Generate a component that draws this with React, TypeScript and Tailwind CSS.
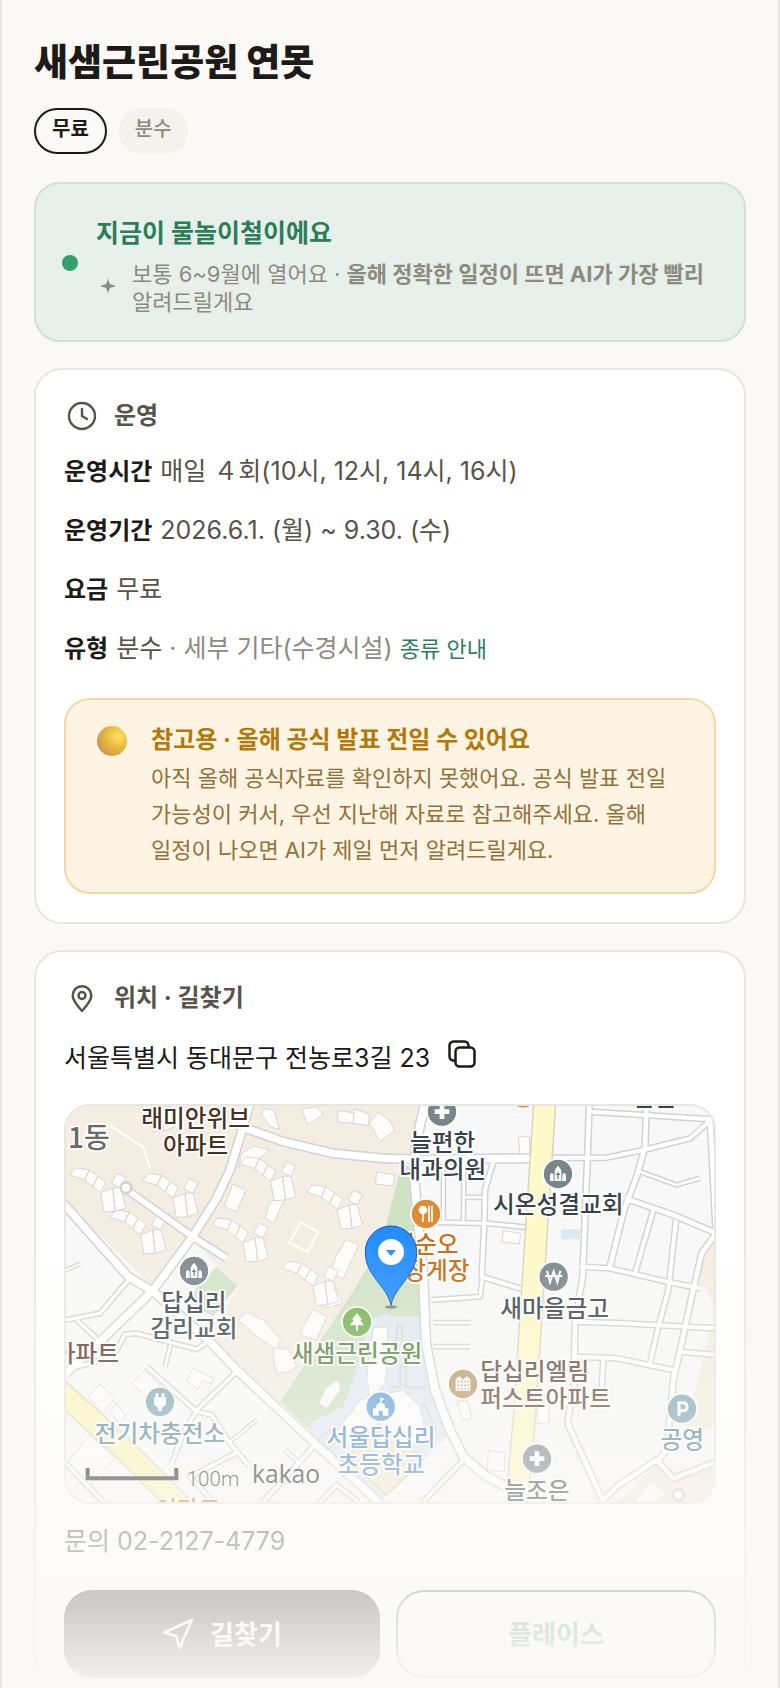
import type { ReactNode } from "react";

type Point = [number, number];

type Road = {
  width: number;
  points: string;
};

type PlaceLabel = {
  lines: string[];
  x: number;
  y: number;
  color: string;
  anchor?: "start" | "middle" | "end";
  size?: number;
};

const ROADS: Road[] = [
  { width: 22, points: "600,40 575,125 540,240 500,325 428,440 310,600 150,755 48,850" },
  { width: 22, points: "560,105 700,155 850,190 1000,205 1110,208 1440,205" },
  { width: 18, points: "225,295 428,440 530,505" },
  { width: 22, points: "40,340 235,560 310,605 480,755 560,840 795,1060 990,1240" },
  { width: 24, points: "1125,40 1100,150 1092,260 1120,560 1128,760 1155,900 1200,1020 1240,1100 1310,1160 1390,1200" },
  { width: 14, points: "1618,40 1612,210 1598,560 1575,700 1572,880 1553,1000 1655,1225" },
  { width: 12, points: "1620,65 1985,88" },
  { width: 14, points: "1790,40 1785,170 1760,260 1722,360 1680,530" },
  { width: 12, points: "1510,203 1670,203 1780,180 1920,145 1985,88" },
  { width: 14, points: "1980,80 1998,430 1955,490 1925,620 1895,760 1870,870 1850,1080 1825,1110" },
  { width: 14, points: "1725,325 1870,375 2000,430" },
  { width: 12, points: "1590,530 1680,535 1850,575 1950,595" },
  { width: 12, points: "1810,360 1755,550" },
  { width: 12, points: "1878,390 1855,600 1825,710 1800,820" },
  { width: 12, points: "1575,695 1720,700 2000,715" },
  { width: 12, points: "1575,800 1700,805 1870,840" },
  { width: 12, points: "1890,785 2000,795" },
  { width: 12, points: "1660,810 1655,895" },
  { width: 14, points: "1655,1235 1700,1190 1820,1110 1870,1165 2000,1115" },
  { width: 8, points: "1770,245 1880,285 1950,265" },
  { width: 10, points: "1110,396 1310,400 1430,412" },
  { width: 12, points: "1330,215 1305,300 1303,400 1295,560 1425,600" },
  { width: 8, points: "1180,215 1180,394" },
  { width: 8, points: "1242,215 1240,394" },
  { width: 8, points: "1240,322 1305,322" },
  { width: 10, points: "1145,630 1290,620 1298,560" },
  { width: 8, points: "1150,698 1263,698" },
  { width: 8, points: "1150,770 1260,770" },
  { width: 10, points: "1120,1235 1240,1110" },
  { width: 10, points: "48,690 150,670 240,565" },
  { width: 10, points: "80,690 145,750" },
  { width: 10, points: "48,840 190,800 225,733 260,730 440,778 480,750" },
  { width: 8, points: "362,765 345,830" },
  { width: 10, points: "290,830 440,965 485,975 540,1060 600,1130" },
  { width: 10, points: "560,845 440,960 400,1030 365,1120" },
  { width: 6, points: "620,990 540,1055" },
  { width: 10, points: "565,1085 420,1160 490,1236" },
  { width: 12, points: "795,1065 640,1236" },
  { width: 8, points: "705,1080 755,1125" },
  { width: 10, points: "48,1120 160,1236" },
  { width: 10, points: "810,1236 860,1185 925,1236" },
  { width: 6, points: "48,540 90,522" },
];

// Blocks of flats share one footprint, dropped at [x, y].
const FLATS: Point[] = [
  [277, 248],
  [180, 358],
  [487, 382],
  [570, 198],
  [770, 283],
  [697, 512],
  [60, 232],
  [205, -10],
];

const LOTS: string[] = [
  "548,282 587,300 560,366 523,350",
  "680,318 704,330 692,352 672,398 645,385 655,350",
  "980,246 1034,254 1030,288 976,282",
  "865,62 912,68 910,100 862,96",
  "912,56 958,72 955,106 910,100",
  "985,66 1020,92 1034,122 990,154 958,100",
  "756,58 800,50 820,74 772,104",
  "640,55 672,60 688,118 660,110 634,72",
  "575,190 610,168 660,180 620,210 566,232",
  "888,448 926,464 905,510 880,566 842,550 858,498",
  "566,690 588,665 640,690 692,750 680,780 620,740",
  "790,658 830,680 800,750 752,735 765,700",
  "672,775 715,778 740,830 718,845 682,850 670,810",
  "800,590 850,580 878,640 828,655",
  "1405,142 1438,138 1440,195 1410,196",
  "1360,422 1412,430 1408,462 1355,456",
  "1222,935 1252,930 1265,985 1238,992",
  "1462,945 1498,945 1496,1002 1462,1000",
  "1315,1082 1366,1088 1362,1145 1312,1140",
  "865,870 872,900 830,955 806,940 830,890",
  "970,712 1012,712 1014,800 1005,880 960,930 950,860 962,780",
  "930,930 1060,900 1110,950 1130,1040 1000,1110 850,1040",
  "150,882 195,925 158,970 115,920",
  "285,842 330,885 300,930 245,880",
  "430,835 492,865 484,882 458,872 444,898 410,872",
  "120,1035 195,1105 115,1190 48,1120",
  "200,940 228,980 210,1000 178,965",
  "1800,1175 1850,1210 1820,1240 1750,1236",
];

const PLACES: PlaceLabel[] = [
  { lines: ["래미안위브", "아파트"], x: 437, y: 112, color: "#4a3020" },
  { lines: ["1동"], x: 54, y: 174, color: "#6b6b6b", anchor: "start", size: 84 },
  { lines: ["늘편한", "내과의원"], x: 1178, y: 184, color: "#37434b" },
  { lines: ["시온성결교회"], x: 1525, y: 370, color: "#37434b" },
  { lines: ["최순오", "간장게장"], x: 1128, y: 488, color: "#c4690c" },
  { lines: ["새마을금고"], x: 1514, y: 680, color: "#37434b" },
  { lines: ["답십리", "감리교회"], x: 432, y: 662, color: "#37434b" },
  { lines: ["아파트"], x: 207, y: 816, color: "#553526", anchor: "end" },
  { lines: ["새샘근린공원"], x: 921, y: 816, color: "#527f39" },
  { lines: ["답십리엘림", "퍼스트아파트"], x: 1291, y: 871, color: "#5d4435", anchor: "start" },
  { lines: ["서울답십리", "초등학교"], x: 993, y: 1068, color: "#4587c8" },
  { lines: ["전기차충전소"], x: 330, y: 1055, color: "#4f8198" },
  { lines: ["공영"], x: 1897, y: 1075, color: "#4f8198" },
  { lines: ["늘조은"], x: 1461, y: 1226, color: "#37434b" },
  { lines: ["이마트"], x: 414, y: 1284, color: "#e06c10" },
  { lines: ["은문"], x: 1815, y: 48, color: "#37434b" },
];

const Marker = ({ x, y, color, children }: { x: number; y: number; color: string; children?: ReactNode }) => (
  <g transform={`translate(${x} ${y})`}>
    <circle r="45" fill={color} stroke="#fff" strokeWidth="5" />
    {children}
  </g>
);

const Church = () => (
  <>
    <path d="M-24 21V2q5-10 11 0v19zM13 21V2q5-10 11 0v19zM-10 21V-10Q-8-17 0-25Q8-17 10-10V21z" fill="#fff" />
    <path d="M0-6V15M-6 1H6" stroke="#6f7b81" strokeWidth="4" />
  </>
);

const KakaoMap = () => (
  <svg
    viewBox="48 48 1944 1188"
    preserveAspectRatio="xMidYMid slice"
    className="size-full"
    role="img"
    aria-label="새샘근린공원 주변 지도"
  >
    <rect x="48" y="48" width="1944" height="1188" fill="#f8f8f8" />
    <path d="M48 48H1120L1098 200L1050 220L1000 460L900 620L690 938L480 748L565 590L430 455L310 590L48 340z" fill="#f4ede2" />
    <path d="M1992 440L1965 500L1940 580L1970 600L1992 650zM1992 680L1900 1040L1992 1010zM1825 1115L1700 1236H1992V1125L1870 1170z" fill="#f4ede2" />
    <path d="M500 530L563 587L490 680L420 640L440 590z" fill="#d2e5c8" />
    <path d="M1055 215L1090 240L1095 440L1112 560V682L1000 700L905 890L880 950L785 1025L690 937L905 610L960 520L1010 400z" fill="#cfe2c4" />
    <path d="M970 685L1005 668L1030 680L1112 682L1125 770L1150 890L1200 1030L1100 1130L990 1236L785 1035V995L880 950L915 850L940 760z" fill="#dfe9f2" />
    <path d="M1533 418H1590V448H1533z" fill="#dce8f0" />

    <g fill="#fdfcfb" stroke="#dad6d1" strokeWidth="3">
      {LOTS.map((points) => (
        <polygon key={points} points={points} />
      ))}
      {FLATS.map(([x, y]) => (
        <path
          key={`${x}-${y}`}
          transform={`translate(${x} ${y})`}
          d="M0 24L16 2L36 4L58 8L44 38zM58 8L84 26L68 58L44 38zM84 26L108 44L92 76L68 58zM124 48L140 18L168 30L152 62zM92 76L128 62L136 132L102 134zM128 62L152 60L168 122L136 132z"
        />
      ))}
    </g>
    <path d="M752 398L804 426L772 486L718 458z" fill="none" stroke="#fff" strokeWidth="6" />
    <path d="M180 106L280 172L300 234" fill="none" stroke="#fff" strokeWidth="6" />
    <path d="M985 1000L1120 1110L1010 1215L885 1105z" fill="#f3e8cf" stroke="#d9c9a5" strokeWidth="4" />
    <g fill="none" stroke="#ddcfc4" strokeWidth="4">
      <path d="M1040 780V707H1056V780M1018 892H1050V830H1068V892H1130" />
      <path d="M850 1010L800 1050M1120 940L1160 1020" />
    </g>

    <g fill="none" strokeLinejoin="round">
      {ROADS.map((road) => (
        <polyline key={road.points} points={road.points} stroke="#d2d2d2" strokeWidth={road.width + 9} />
      ))}
      {ROADS.map((road) => (
        <polyline key={road.points} points={road.points} stroke="#fff" strokeWidth={road.width} />
      ))}
      <circle cx="228" cy="293" r="16" fill="#fff" stroke="#d2d2d2" strokeWidth="8" />
      <circle cx="1885" cy="1215" r="16" fill="#fff" stroke="#d2d2d2" strokeWidth="8" />
      <polyline points="1484,40 1446,630 1425,960 1400,1240" stroke="#d6d1b8" strokeWidth="70" />
      <polyline points="1484,40 1446,630 1425,960 1400,1240" stroke="#fdf9c8" strokeWidth="62" />
      <polyline points="20,895 210,1065 410,1265" stroke="#d6d1b8" strokeWidth="70" />
      <polyline points="20,895 210,1065 410,1265" stroke="#fdf6b8" strokeWidth="62" />
    </g>

    <Marker x={432} y={543} color="#78868c">
      <Church />
    </Marker>
    <Marker x={1524} y={252} color="#78868c">
      <Church />
    </Marker>
    <Marker x={1176} y={65} color="#78868c">
      <path d="M0-22V22M-22 0H22" stroke="#fff" strokeWidth="14" />
    </Marker>
    <Marker x={1461} y={1106} color="#78868c">
      <path d="M0-22V22M-22 0H22" stroke="#fff" strokeWidth="14" />
    </Marker>
    <Marker x={1420} y={10} color="#e08a2e" />
    <Marker x={1128} y={372} color="#de8c33">
      <circle cx="-9" cy="-12" r="13" fill="#fff" />
      <path d="M-9-4V24M9-25V24M18-25V24" stroke="#fff" strokeWidth="5" />
    </Marker>
    <Marker x={1511} y={560} color="#78868c">
      <path d="M-20-18L-11 17L0-16L11 17L20-18M-26-2H26" fill="none" stroke="#fff" strokeWidth="6" />
    </Marker>
    <Marker x={921} y={696} color="#76b150">
      <path d="M0-27L15-7H9L21 10H3V26H-3V10H-21L-9-7H-15z" fill="#fff" />
    </Marker>
    <Marker x={992} y={950} color="#5f9fd8">
      <path d="M-23 27V5H-13V-5L0-15L13-5V5H23V27H6V12H-6V27z" fill="#fff" />
      <path d="M0-12V-27L10-22L0-18" fill="#fff" stroke="#fff" strokeWidth="3" />
    </Marker>
    <Marker x={330} y={936} color="#7fa5b5">
      <path d="M-18-14H18V2Q18 12 6 16V27H-6V16Q-18 12-18 2z" fill="#fff" />
      <path d="M-9-14V-26M9-14V-26" stroke="#fff" strokeWidth="8" />
    </Marker>
    <Marker x={1239} y={882} color="#bd9465">
      <path d="M-22 21V-14L-12-23L0-14L12-23L22-14V21z" fill="#fff" />
      <path d="M-16-7H18M-16 4H18M-16 15H18" stroke="#bd9465" strokeWidth="5" strokeDasharray="5 5" />
    </Marker>
    <Marker x={1896} y={956} color="#7fa5b5">
      <path d="M-9 22V-18H3Q15-18 15-6T3 6H-9" fill="none" stroke="#fff" strokeWidth="9" />
    </Marker>

    <g className="font-['Noto_Sans_CJK_KR',sans-serif] font-medium">
      {PLACES.map(({ lines, x, y, color, anchor = "middle", size = 71 }) => (
        <text
          key={`${x}-${y}`}
          textAnchor={anchor}
          fontSize={size}
          fill={color}
          stroke="#fff"
          strokeWidth="11"
          strokeLinejoin="round"
          paintOrder="stroke"
        >
          {lines.map((line, i) => (
            <tspan key={line} x={x} y={y + i * 80}>
              {line}
            </tspan>
          ))}
        </text>
      ))}
    </g>

    <ellipse cx="1023" cy="651" rx="18" ry="5" fill="#55663f" opacity="0.7" />
    <path d="M1023 646C1011 585 946 560 946 485A77 77 0 0 1 1100 485C1100 560 1035 585 1023 646z" fill="#1f8bff" stroke="#0b53c4" strokeWidth="3" />
    <circle cx="1023" cy="486" r="39" fill="#fff" />
    <path d="M1008 480H1038L1023 498z" fill="#1f8bff" />

    <path d="M113 1134V1165H379V1134" fill="none" stroke="#202020" strokeWidth="12" />
    <text x="410" y="1187" fontSize="62" fill="#202020" className="font-['Roboto',sans-serif] font-light">
      100m
    </text>
    <text x="606" y="1180" fontSize="74" fill="#202020" className="font-['Open_Sans',sans-serif]">
      kakao
    </text>
  </svg>
);

const ClockIcon = () => (
  <svg viewBox="0 0 36 36" fill="none" stroke="currentColor" strokeWidth="2.4" strokeLinecap="round" strokeLinejoin="round" className="size-9">
    <circle cx="18" cy="18" r="13" />
    <path d="M18 11V18L23 21" />
  </svg>
);

const PinIcon = () => (
  <svg viewBox="0 0 36 36" fill="none" stroke="currentColor" strokeWidth="2.5" strokeLinejoin="round" className="size-9">
    <path d="M18 31C14 26.5 8.7 21 8.7 15.5A9.3 9.3 0 0 1 27.3 15.5C27.3 21 22 26.5 18 31z" />
    <circle cx="18" cy="15.5" r="3.5" />
  </svg>
);

const CopyIcon = () => (
  <svg viewBox="0 0 32 32" fill="none" stroke="currentColor" strokeWidth="2.5" strokeLinejoin="round" className="size-8">
    <rect x="9.5" y="9.5" width="19" height="19" rx="4" />
    <path d="M9.5 22.5H7.5A4 4 0 0 1 3.5 18.5V7.5A4 4 0 0 1 7.5 3.5H18.5A4 4 0 0 1 22.5 7.5V9.5" />
  </svg>
);

const SparkleIcon = () => (
  <svg viewBox="0 0 16 16" fill="currentColor" className="mb-1 size-4 shrink-0">
    <path d="M8 0Q9 5.500 10.500 6.300L16 8L10.500 9.700Q9 10.500 8 16Q7 10.500 5.500 9.700L0 8L5.500 6.300Q7 5.500 8 0z" />
  </svg>
);

const DirectionIcon = () => (
  <svg viewBox="0 0 32 32" fill="none" stroke="currentColor" strokeWidth="2.6" strokeLinejoin="round" className="size-8">
    <path d="M30 2L2 14.5L14 18L17.5 30z" />
  </svg>
);

const CardTitle = ({ icon, children }: { icon: ReactNode; children: ReactNode }) => (
  <h2 className="flex items-center gap-3.5 text-2xl leading-9 font-bold text-[#57534a]">
    {icon}
    {children}
  </h2>
);

const InfoRow = ({ label, children }: { label: string; children: ReactNode }) => (
  <div className="flex items-baseline gap-2 leading-[42px]">
    <dt className="text-2xl leading-[42px] font-bold text-[#1c1b18]">{label}</dt>
    <dd>{children}</dd>
  </div>
);

const App = () => {
  return (
    <div className="relative h-screen overflow-hidden border-x-2 border-[#e8e6e0] bg-[#faf9f5] font-['Inter','Noto_Sans_CJK_KR',sans-serif] break-keep text-[#57534a]">
      <main className="flex flex-col gap-[26px] px-8 pt-[38px]">
        <header className="pb-0.5">
          <h1 className="text-[37px] leading-[50px] font-extrabold text-[#1c1b18]">새샘근린공원 연못</h1>
          <ul className="mt-5 flex gap-3 text-xl leading-[38px]">
            <li className="rounded-full border-2 border-[#1c1b18] px-4 pb-1 font-bold text-[#1c1b18]">무료</li>
            <li className="rounded-full border-2 border-[#f3f2ed] bg-[#f3f2ed] px-3.5 pb-1 font-medium text-[#8f8a7e]">분수</li>
          </ul>
        </header>

        <section className="flex items-center gap-4.5 rounded-[26px] border-2 border-[#cde3d8] bg-[#e7f0eb] px-[26px] pt-[26px] pb-6">
          <span className="size-4 shrink-0 rounded-full bg-[#35a06b]" />
          <div>
            <h2 className="text-[25px] leading-[46px] font-bold text-[#2c7d5a]">지금이 물놀이철이에요</h2>
            <div className="mt-1 flex items-center gap-4 pl-1 text-[#8f8a7e]">
              <SparkleIcon />
              <p className="flex-1 text-[22px] leading-7">
                보통 6~9월에 열어요 · <b>올해 정확한 일정이 뜨면 AI가 가장 빨리</b> 알려드릴게요
              </p>
            </div>
          </div>
        </section>

        <section className="rounded-[28px] border-2 border-[#e8e6e0] bg-white p-7">
          <CardTitle icon={<ClockIcon />}>운영</CardTitle>
          <dl className="mt-4 flex flex-col gap-4 text-[25px]">
            <InfoRow label="운영시간">매일 ４회(10시, 12시, 14시, 16시)</InfoRow>
            <InfoRow label="운영기간">2026.6.1. (월) ~ 9.30. (수)</InfoRow>
            <InfoRow label="요금">무료</InfoRow>
            <InfoRow label="유형">
              분수 <span className="text-[#8f8a7e]">· 세부 기타(수경시설)</span>{" "}
              <a href="#types" className="text-[22px] text-[#2c7d5a]">
                종류 안내
              </a>
            </InfoRow>
          </dl>

          <aside className="mt-7 flex items-start gap-[17px] rounded-[26px] border-2 border-[#f0d9a4] bg-[#fef4e3] p-6">
            <svg viewBox="0 0 44 34" className="h-[34px] w-11 shrink-0" aria-hidden="true">
              <defs>
                <radialGradient id="sun" cx="0.7" cy="0.35" r="0.75">
                  <stop offset="0" stopColor="#ffe55c" />
                  <stop offset="0.5" stopColor="#e9b944" />
                  <stop offset="0.85" stopColor="#d7a045" />
                  <stop offset="1" stopColor="#cf8a62" />
                </radialGradient>
              </defs>
              <circle cx="22" cy="17" r="15" fill="url(#sun)" />
            </svg>
            <div className="flex-1">
              <h3 className="text-2xl leading-8 font-bold text-[#b27908]">참고용 · 올해 공식 발표 전일 수 있어요</h3>
              <p className="mt-1 text-[22px] leading-9 text-[#92703a]">
                아직 올해 공식자료를 확인하지 못했어요. 공식 발표 전일 가능성이 커서, 우선 지난해 자료로 참고해주세요. 올해 일정이
                나오면 AI가 제일 먼저 알려드릴게요.
              </p>
            </div>
          </aside>
        </section>

        <section className="rounded-[28px] border-2 border-[#e8e6e0] bg-white p-7">
          <CardTitle icon={<PinIcon />}>위치 · 길찾기</CardTitle>
          <div className="mt-3.5 flex items-center gap-4 text-[25px] leading-10 text-[#1c1b18]">
            <address className="pt-2 not-italic">서울특별시 동대문구 전농로3길 23</address>
            <button type="button" aria-label="주소 복사">
              <CopyIcon />
            </button>
          </div>

          <div className="mt-[26px] h-[400px] overflow-hidden rounded-[26px] border-2 border-[#e8e6e0]">
            <KakaoMap />
          </div>

          <p className="mt-4 text-[25px] leading-[42px]">
            문의 <a href="tel:02-2127-4779">02-2127-4779</a>
          </p>

          <div className="mt-7 flex gap-4 text-[26px] font-bold">
            <button type="button" className="flex h-22 flex-1 items-center justify-center gap-4 rounded-[28px] bg-[#1c1b18] text-white">
              <DirectionIcon />
              길찾기
            </button>
            <button type="button" className="h-22 flex-1 rounded-[28px] border-2 border-[#2c7d5a] bg-white text-[#2c7d5a]">
              플레이스
            </button>
          </div>
        </section>
      </main>

      {/* everything below the map fades into the page */}
      <div className="pointer-events-none absolute inset-x-0 bottom-0 h-[468px] bg-linear-to-b from-[#faf9f5]/0 to-[#faf9f5]/98" />
    </div>
  );
};

export default App;
